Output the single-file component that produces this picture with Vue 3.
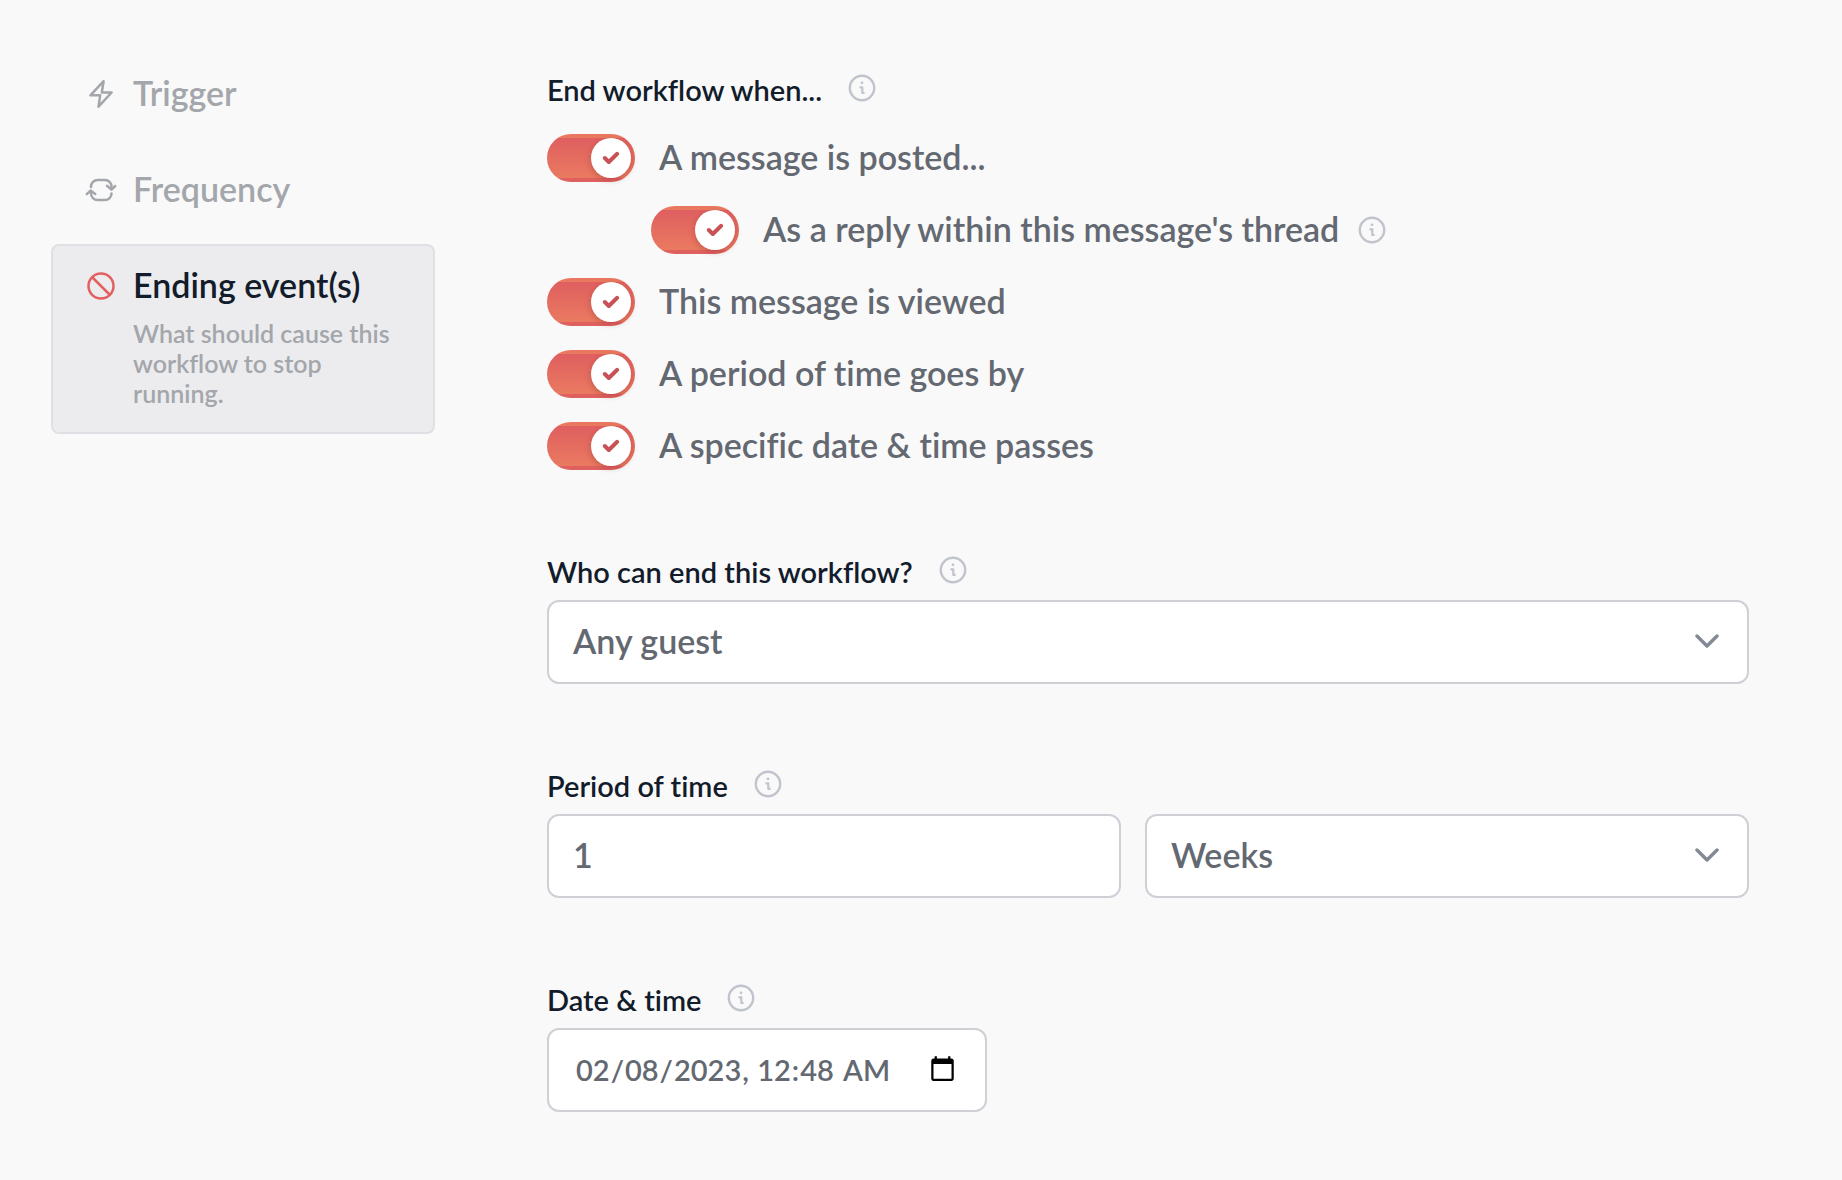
<script setup>
import { h, ref } from 'vue'

const steps = [
  { id: 'trigger', title: 'Trigger' },
  { id: 'frequency', title: 'Frequency' },
  {
    id: 'ending',
    title: 'Ending event(s)',
    text: 'What should cause this workflow to stop running.',
  },
]
const current = ref('ending')

const endings = ref([
  { id: 'posted', label: 'A message is posted...', on: true },
  { id: 'reply', label: "As a reply within this message's thread", on: true, nested: true, info: true },
  { id: 'viewed', label: 'This message is viewed', on: true },
  { id: 'period', label: 'A period of time goes by', on: true },
  { id: 'date', label: 'A specific date & time passes', on: true },
])

const who = ref('Any guest')
const amount = ref('1')
const unit = ref('Weeks')
const date = ref('2023-02-08T00:48')

const stroke = { fill: 'none', stroke: 'currentColor', 'stroke-linecap': 'round', 'stroke-linejoin': 'round' }

const InfoIcon = () =>
  h('svg', { viewBox: '0 0 28 28', width: 28, height: 28, 'aria-hidden': 'true', ...stroke }, [
    h('circle', { cx: 14, cy: 14, r: 12.2, 'stroke-width': 2.4 }),
    h('path', { d: 'M12.4 13.4h1.9v5.2M14.3 18.9h1.4', 'stroke-width': 2.2 }),
    h('circle', { cx: 14, cy: 8.8, r: 1.4, fill: 'currentColor', stroke: 'none' }),
  ])

const Chevron = () =>
  h('svg', { class: 'chevron', viewBox: '0 0 24 14', width: 24, height: 14, 'aria-hidden': 'true', ...stroke }, [
    h('path', { d: 'M2 2l10 10L22 2', 'stroke-width': 3.4 }),
  ])
</script>

<template>
  <div class="page">
    <nav class="steps" aria-label="Workflow steps">
      <button
        v-for="step in steps"
        :key="step.id"
        type="button"
        class="step"
        :class="{ active: step.id === current }"
        @click="current = step.id"
      >
        <svg class="step-icon" viewBox="0 0 32 32" width="32" height="32" aria-hidden="true">
          <path v-if="step.id === 'trigger'" d="M18.6 3.2L5.4 17.3h9.8L13.5 28.7L26.6 14.5h-9.8z" />
          <template v-else-if="step.id === 'frequency'">
            <path d="M6 13v-.3a6.7 6.7 0 0 1 6.7-6.7h7.3a6.5 6.5 0 0 1 6.5 6.500v2.500" />
            <path d="M26.500 19.600a6.500 6.500 0 0 1-6.500 6.500h-7.500a6.500 6.500 0 0 1-6.500-6.500v-2.500" />
            <path d="M22 11.800l4.500 3.800L30.200 12M1.800 20.200L5.600 16.600L10.200 20" />
          </template>
          <template v-else>
            <circle cx="16" cy="16" r="12.5" />
            <path d="M7.5 7.5l17 17" />
          </template>
        </svg>
        <span class="step-body">
          <span class="step-title">{{ step.title }}</span>
          <span v-if="step.text" class="step-text">{{ step.text }}</span>
        </span>
      </button>
    </nav>

    <form class="settings" @submit.prevent>
      <fieldset>
        <legend class="heading">End workflow when... <InfoIcon /></legend>
        <div v-for="item in endings" :key="item.id" class="option" :class="{ nested: item.nested }">
          <span class="toggle">
            <input :id="item.id" v-model="item.on" type="checkbox" role="switch" />
            <svg viewBox="0 0 40 40" width="40" height="40" aria-hidden="true">
              <path d="M13.8 20l4 4L26.2 15.8" />
            </svg>
          </span>
          <label :for="item.id">{{ item.label }}</label>
          <InfoIcon v-if="item.info" />
        </div>
      </fieldset>

      <section class="field">
        <label class="heading" for="who">Who can end this workflow? <InfoIcon /></label>
        <div class="picker">
          <select id="who" v-model="who" class="control">
            <option>Any guest</option>
          </select>
          <Chevron />
        </div>
      </section>

      <section class="field">
        <label class="heading" for="amount">Period of time <InfoIcon /></label>
        <div class="pair">
          <input id="amount" v-model="amount" class="control" type="text" inputmode="numeric" />
          <div class="picker">
            <select v-model="unit" class="control" aria-label="Unit of time">
              <option>Weeks</option>
            </select>
            <Chevron />
          </div>
        </div>
      </section>

      <section class="field">
        <label class="heading" for="when">Date &amp; time <InfoIcon /></label>
        <input id="when" v-model="date" class="control date" type="datetime-local" />
      </section>
    </form>
  </div>
</template>

<style>
body {
  background: #f9f9f9;
}
</style>

<style scoped>
.page {
  display: flex;
  align-items: flex-start;
  gap: 112px;
  padding: 52px 93px 68px 51px;
  font-family: Lato, sans-serif;
  font-weight: 600;
  font-variant-ligatures: none;
  color: #636871;
}

.page * {
  box-sizing: border-box;
}

.page button,
.page input,
.page select {
  margin: 0;
  font: inherit;
  font-variant-ligatures: none;
  color: inherit;
}

.steps {
  display: flex;
  flex: 0 0 384px;
  flex-direction: column;
}

.page .step {
  display: flex;
  gap: 16px;
  min-height: 96px;
  padding: 20px 32px 24px;
  text-align: left;
  color: #a3a6ab;
  background: none;
  border: 2px solid transparent;
  border-radius: 8px;
}

.page .step.active {
  background: #ececee;
  border-color: #dfe0e4;
}

.step-icon {
  flex: none;
  margin-top: 4px;
  fill: none;
  stroke: currentColor;
  stroke-width: 2.5;
  stroke-linecap: round;
  stroke-linejoin: round;
}

.active .step-icon {
  color: #e26060;
}

.step-body {
  display: flex;
  flex-direction: column;
  gap: 14px;
}

.step-title {
  font-size: 34px;
  line-height: 38px;
}

.active .step-title {
  color: #121c2b;
}

.step-text {
  font-size: 25px;
  line-height: 30px;
}

.settings {
  display: flex;
  flex: 1;
  flex-direction: column;
  gap: 84px;
  min-width: 0;
  padding-top: 20px;
}

fieldset {
  display: flex;
  flex-direction: column;
  gap: 24px;
  min-width: 0;
  margin: 0;
  padding: 0;
  border: 0;
}

.heading {
  display: flex;
  align-items: center;
  align-self: flex-start;
  gap: 26px;
  padding: 0;
  font-size: 29px;
  line-height: 36px;
  color: #121c2b;
}

legend.heading {
  margin-bottom: 26px;
}

.heading svg,
.option > svg {
  flex: none;
  color: #c1c4cc;
}

.heading svg {
  margin-bottom: 4px;
}

.option {
  display: flex;
  align-items: center;
  height: 48px;
  font-size: 34px;
  line-height: 44px;
}

.option.nested {
  margin-left: 104px;
}

.option label {
  margin: 0 19px 0 24px;
  padding-bottom: 2px;
}

.toggle {
  position: relative;
  display: flex;
}

.toggle input {
  width: 88px;
  height: 48px;
  appearance: none;
  background: #c1c4cc;
  border: 4px solid transparent;
  border-radius: 24px;
}

/* The gradient repeats under the transparent border, giving the track its rim. */
.toggle input:checked {
  background: linear-gradient(#df5f60, #ea7a60) padding-box border-box;
}

.toggle svg {
  position: absolute;
  top: 4px;
  left: 4px;
  pointer-events: none;
  background: #fff;
  border-radius: 50%;
  box-shadow: 0 2px 6px rgba(120, 30, 30, 0.3);
  fill: none;
  stroke: none;
  stroke-width: 4;
  stroke-linecap: round;
  stroke-linejoin: round;
}

.toggle input:checked + svg {
  left: 44px;
  stroke: #c75356;
}

.field {
  display: flex;
  flex-direction: column;
  gap: 10px;
}

.page .control {
  width: 100%;
  height: 84px;
  padding: 0 24px 4px;
  font-size: 34px;
  background: #fff;
  border: 2px solid #ced0d6;
  border-radius: 12px;
  outline: 0;
  appearance: none;
}

.picker {
  position: relative;
}

.chevron {
  position: absolute;
  top: 34px;
  right: 30px;
  color: #838995;
  pointer-events: none;
}

.pair {
  display: grid;
  grid-template-columns: 19fr 20fr;
  gap: 24px;
}

.page .control.date {
  max-width: 440px;
  padding: 0 26px 2px;
  font-size: 29px;
}
</style>
